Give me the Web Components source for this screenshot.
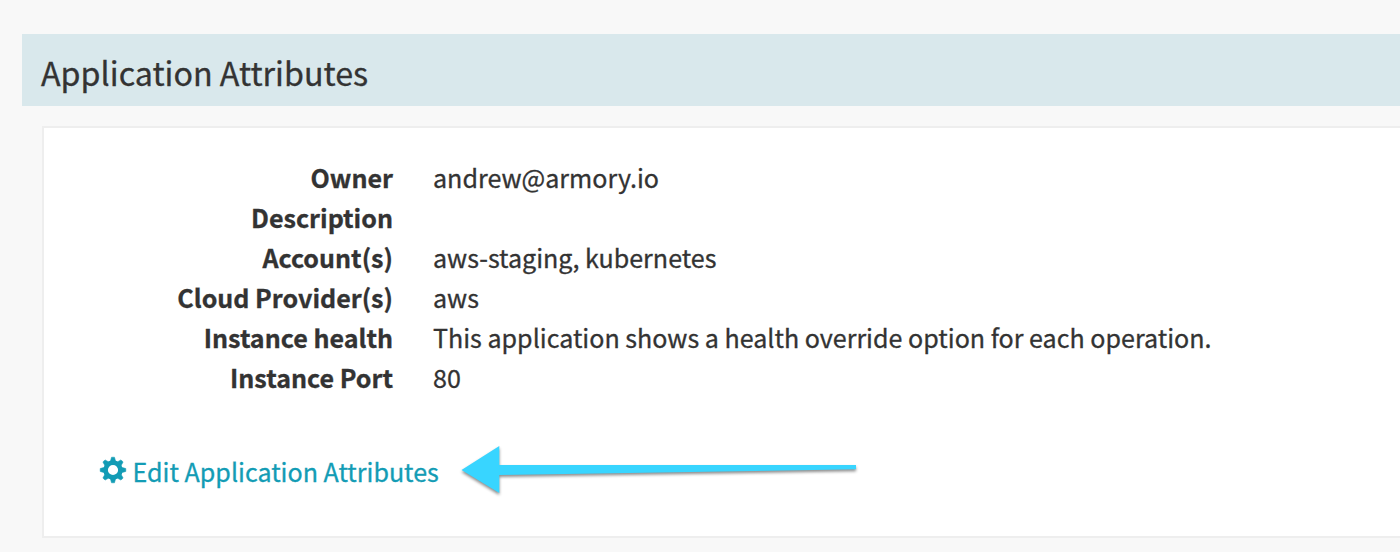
<!DOCTYPE html>
<html lang="en">
<head>
<meta charset="utf-8">
<title>Application Attributes</title>
<style>
html,body{margin:0;height:100%;overflow:hidden}
body{background:#f8f8f8;color:#333;font:25.07px/40px "Noto Sans CJK SC","Noto Sans",sans-serif;-webkit-text-stroke:.3px currentColor}
</style>
</head>
<body>
<config-section heading="Application Attributes">
  <attribute-list>
    <attribute-row label="Owner">andrew@armory.io</attribute-row>
    <attribute-row label="Description"></attribute-row>
    <attribute-row label="Account(s)">aws-staging, kubernetes</attribute-row>
    <attribute-row label="Cloud Provider(s)">aws</attribute-row>
    <attribute-row label="Instance health">This application shows a health override option for each operation.</attribute-row>
    <attribute-row label="Instance Port">80</attribute-row>
  </attribute-list>
  <edit-link>Edit Application Attributes</edit-link>
  <callout-arrow></callout-arrow>
</config-section>
<script>
class ShadowElement extends HTMLElement {
  constructor() {
    super();
    this.attachShadow({mode: 'open'}).innerHTML = this.render();
  }
  render() { return ''; }
}

customElements.define('config-section', class extends ShadowElement {
  render() {
    return `<style>
      :host{display:block;padding:34px 0 0 22px}
      h4{margin:0;height:72px;box-sizing:border-box;padding:2px 0 0 19px;background:#d9e8ec;font-weight:400;font-size:32.25px;line-height:72px;white-space:nowrap}
      .card{margin:20px -2px 0 20px;height:412px;box-sizing:border-box;border:2px solid #eee;background:#fff;padding:29px 0 0 55px;position:relative}
    </style><h4>${this.getAttribute('heading')}</h4><div class="card"><slot></slot></div>`;
  }
});

customElements.define('attribute-list', class extends ShadowElement {
  render() {
    return `<style>:host{display:block;margin-bottom:54px}</style><slot></slot>`;
  }
});

customElements.define('attribute-row', class extends ShadowElement {
  render() {
    return `<style>
      :host{display:grid;grid-template-columns:294px 1fr;column-gap:40px;height:40px;white-space:nowrap}
      b{text-align:right;font-weight:700}
    </style><b>${this.getAttribute('label')}</b><span><slot></slot></span>`;
  }
});

customElements.define('edit-link', class extends ShadowElement {
  render() {
    return `<style>
      :host{display:flex;height:40px;color:#139cb5;white-space:nowrap}
      svg{width:28px;height:28px;margin:5px 5.6px 0 0;flex:none}
    </style><svg viewBox="-14 -14 28 28" fill="currentColor">
      <defs><path id="t" d="M-2.700-8.500L-1.500-12.800H1.500L2.700-8.500Z"/></defs>
      <path fill-rule="evenodd" d="M0-9.700A9.700 9.700 0 1 1 0 9.700A9.700 9.700 0 1 1 0-9.700ZM0-5.100A5.100 5.100 0 1 0 0 5.100A5.100 5.100 0 1 0 0-5.100Z"/>
      <g stroke="currentColor" stroke-width=".5" stroke-linejoin="round"><use href="#t"/><use href="#t" transform="rotate(45)"/><use href="#t" transform="rotate(90)"/><use href="#t" transform="rotate(135)"/><use href="#t" transform="rotate(180)"/><use href="#t" transform="rotate(225)"/><use href="#t" transform="rotate(270)"/><use href="#t" transform="rotate(315)"/></g>
    </svg><span><slot></slot></span>`;
  }
});

customElements.define('callout-arrow', class extends ShadowElement {
  render() {
    return `<style>
      :host{position:absolute;left:406px;top:312px;width:420px;height:64px}
      svg{display:block;overflow:visible;filter:drop-shadow(0 2px 1.5px rgba(0,0,0,.45))}
    </style><svg width="420" height="64" viewBox="450 440 420 64"><path fill="#38d5ff" d="M461.500 470L499.300 446V465H856V469.300L499.300 475V493Z"/></svg>`;
  }
});
</script>
</body>
</html>
